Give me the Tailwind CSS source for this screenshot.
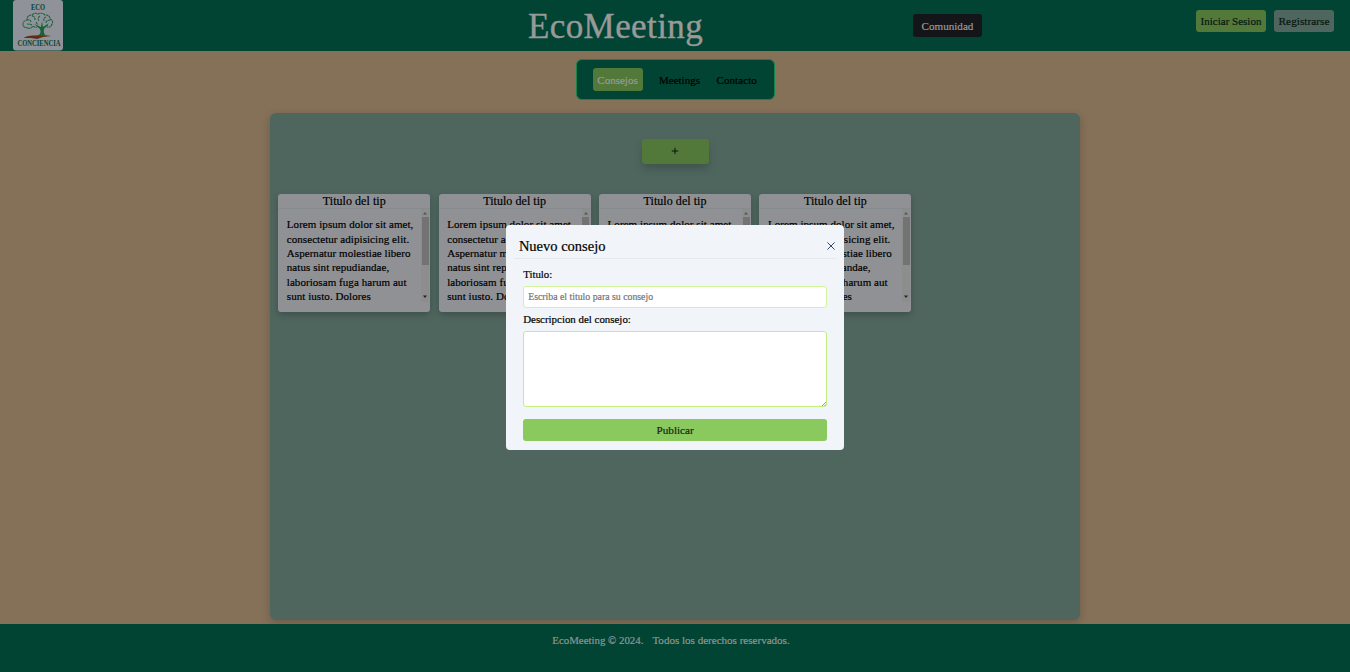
<!DOCTYPE html>
<html lang="es">
<head>
<meta charset="utf-8">
<title>EcoMeeting</title>
<script src="https://cdn.jsdelivr.net/npm/@tailwindcss/browser@4"></script>
</head>
<body class="relative flex h-[672px] flex-col overflow-hidden bg-[#857058] font-['Liberation_Serif',serif] text-[11px] leading-[14.3px] text-black [-webkit-text-stroke:0.2px]">
<header class="grid h-[50.500px] shrink-0 grid-cols-3 bg-[#014433]">
  <div class="pl-[13px]">
    <svg class="h-[51px] w-[50px]" viewBox="0 0 50 51">
      <rect width="50" height="50.5" rx="3" fill="#909299"/>
      <g font-family="Liberation Serif, serif" font-weight="700" fill="#07442f" stroke="none" text-anchor="middle">
        <text x="25" y="10" font-size="7.4" textLength="14" lengthAdjust="spacingAndGlyphs">ECO</text>
        <text x="26" y="46" font-size="7.4" textLength="43" lengthAdjust="spacingAndGlyphs">CONCIENCIA</text>
      </g>
      <path d="M12 37q4-2 10-1.500 7-1 13 0l3 .5-8 1-6 2-6-1-7 0z" fill="#652b12"/>
      <path d="M24 36q5-2 3-7l-6-5 7 3 1-6 1 6 6-4-5 6q-1 4 2 7z" fill="#176334"/>
      <path d="M15 28q-5 0-5-4 0-3 4-4 0-5 5-5 3-3 6-1 4-2 7 1 5 0 5 4 4 2 2 5-1 4-5 3M15 28q3 1 5-2 2 2 4 1M14 20q3-1 4 2M19 16q3 0 3 4M27 16q-3 2-1 5M33 17q-3 1-2 4M37 20q-4 0-4 3M14 24q3 0 5 1M23 22l2 3M35 25l-3 2" fill="none" stroke="#20633e" stroke-width="1.1" stroke-dasharray="2.500 .5"/>
    </svg>
  </div>
  <h1 class="pt-[6px] pl-[78px] text-[35px] leading-[42px] tracking-[0.4px] text-[#999] [-webkit-text-stroke:0.4px]">EcoMeeting</h1>
  <div class="flex items-start justify-between pr-4 pl-[13px]">
    <button class="mt-[14px] h-[23px] w-[69px] rounded-[3px] bg-[#141519] pt-px text-[11.1px] text-[#999]">Comunidad</button>
    <div class="mt-[9.500px] flex gap-2">
      <button class="h-[22.500px] w-[70px] rounded-[3px] bg-[#52793a] text-[11px] text-[#07160e]">Iniciar Sesion</button>
      <button class="h-[22.500px] w-[60px] rounded-[3px] bg-[#4f665f] text-[11.3px] text-[#07160e]">Registrarse</button>
    </div>
  </div>
</header>
<main class="flex flex-1 flex-col items-center">
  <nav class="mt-[8.900px] flex h-[41px] w-[199px] shrink-0 items-center rounded-[6px] border border-[#16834a] bg-[#014433] pl-4">
    <a class="flex h-[23px] w-[50px] items-center justify-center rounded-[3px] bg-[#52793a] text-[#999]">Consejos</a>
    <a class="ml-[16.500px]">Meetings</a>
    <a class="ml-[16.500px] tracking-[0.1px]">Contacto</a>
  </nav>
  <section class="mt-[12.900px] flex h-[506.500px] w-[810px] flex-col items-center rounded-[6px] bg-[#4f665f] shadow-[0_3px_9px_rgba(0,0,0,0.18)]">
    <button class="mt-[25.500px] h-[25px] w-[67px] shrink-0 rounded-[3px] bg-[#52793a] shadow-[0_5px_9px_rgba(0,0,0,0.18)]">
      <svg class="mx-auto -mt-px size-[8px]" viewBox="0 0 8 8" stroke="#07160e" stroke-width="1"><path d="M4 .8v6.400M.8 4h6.400"/></svg>
    </button>
    <div id="tips" class="mt-[30px] flex gap-[8.400px] self-start pl-[8.300px]"></div>
  </section>
</main>
<footer class="flex h-12 shrink-0 justify-center gap-[9px] bg-[#014433] pt-[8.500px] pr-2 text-[#8f9692]"><span class="text-[10.85px]">EcoMeeting © 2024.</span><span class="text-[11.05px]">Todos los derechos reservados.</span></footer>

<template id="tip">
  <article class="h-[118px] w-[152px] rounded-[3px] bg-[#8f9195] shadow-[0_3px_7px_rgba(0,0,0,0.22)]">
    <h2 class="h-[15.500px] border-b border-[#868b90] text-center text-[12px] leading-[15px] tracking-[0.05px]">Titulo del tip</h2>
    <div class="flex">
      <p class="h-[93px] flex-1 overflow-hidden pt-[8.200px] pl-[8.500px] tracking-[0.06px] whitespace-nowrap">Lorem ipsum dolor sit amet,<br>consectetur adipisicing elit.<br>Aspernatur molestiae libero<br>natus sint repudiandae,<br>laboriosam fuga harum aut<br>sunt iusto. Dolores</p>
      <div class="mr-px flex h-[93px] w-[8px] flex-col items-center justify-between bg-[#8d8d8d]">
        <svg class="mt-[3px] h-[3px] w-[4px] shrink-0" viewBox="0 0 4 3"><path d="M0 2.500h4L2 0z" fill="#555"/></svg>
        <span class="mt-[2px] h-[48px] w-[7px] bg-[#737373]"></span>
        <svg class="mt-auto mb-[4px] h-[3px] w-[4px] shrink-0" viewBox="0 0 4 3"><path d="M0 .5h4L2 3z" fill="#222"/></svg>
      </div>
    </div>
  </article>
</template>

<div class="absolute top-[225px] left-[506.400px] h-[225px] w-[337.500px] rounded-[4px] bg-[#f1f5f9] px-2">
  <div class="flex h-[34px] items-center justify-between border-b border-[#e5e9ee] pt-[8px] pl-[4.500px]">
    <h2 class="text-[14.5px] leading-[20px]">Nuevo consejo</h2>
    <svg class="mr-px size-[8px]" viewBox="0 0 8 8" stroke="#334a6b" stroke-width="1"><path d="M.4.4l7.200 7.200M7.600.4L.4 7.600"/></svg>
  </div>
  <form class="flex flex-col px-[8.800px] pt-[8px]">
    <label class="text-[10.8px]">Titulo:</label>
    <input class="mt-[4.400px] h-[22px] rounded-[3px] border border-[#d1f49a] bg-white px-1 text-[9.8px] placeholder:text-[#757575]" placeholder="Escriba el titulo para su consejo">
    <label class="mt-[4.600px] text-[10.9px]">Descripcion del consejo:</label>
    <textarea class="mt-[4px] block h-[76px] resize-none rounded-[3px] border border-[#c2ee80] bg-white outline-none"></textarea>
    <svg class="-mt-[5px] mr-px size-[4px] self-end" viewBox="0 0 4 4" stroke="#777" stroke-width=".7"><path d="M0 4L4 0M2.300 4L4 2.300"/></svg>
    <button type="button" class="mt-[13px] h-[22.500px] rounded-[3px] bg-[#8ac95e] text-[11.2px] text-[#182519]">Publicar</button>
  </form>
</div>
<script>
const tip = document.getElementById('tip');
for (let i = 0; i < 4; i++) document.getElementById('tips').append(tip.content.cloneNode(true));
</script>
</body>
</html>
